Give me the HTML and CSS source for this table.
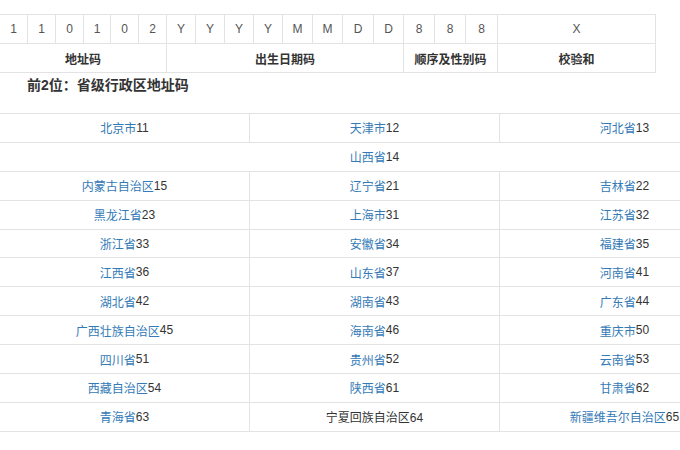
FILE: index.html
```html
<!DOCTYPE html>
<html lang="zh">
<head>
<meta charset="utf-8">
<title>身份证号码结构</title>
<link rel="stylesheet" href="styles.css">
</head>
<body>
<div class="page">
  <div class="id-grid">
    <div class="d">1</div><div class="d">1</div><div class="d">0</div><div class="d">1</div><div class="d">0</div><div class="d">2</div>
    <div class="d">Y</div><div class="d">Y</div><div class="d">Y</div><div class="d">Y</div><div class="d">M</div><div class="d">M</div><div class="d">D</div><div class="d">D</div>
    <div class="d">8</div><div class="d">8</div><div class="d">8</div><div class="d">X</div>
    <div class="h span6">地址码</div>
    <div class="h span8">出生日期码</div>
    <div class="h span3">顺序及性别码</div>
    <div class="h">校验和</div>
  </div>

  <h3 class="title">前2位：省级行政区地址码</h3>

  <div class="prov">
    <div class="c"><a>北京市</a>11</div><div class="c"><a>天津市</a>12</div><div class="c"><a>河北省</a>13</div>
    <div class="c full"><a>山西省</a>14</div>
    <div class="c"><a>内蒙古自治区</a>15</div><div class="c"><a>辽宁省</a>21</div><div class="c"><a>吉林省</a>22</div>
    <div class="c"><a>黑龙江省</a>23</div><div class="c"><a>上海市</a>31</div><div class="c"><a>江苏省</a>32</div>
    <div class="c"><a>浙江省</a>33</div><div class="c"><a>安徽省</a>34</div><div class="c"><a>福建省</a>35</div>
    <div class="c"><a>江西省</a>36</div><div class="c"><a>山东省</a>37</div><div class="c"><a>河南省</a>41</div>
    <div class="c"><a>湖北省</a>42</div><div class="c"><a>湖南省</a>43</div><div class="c"><a>广东省</a>44</div>
    <div class="c"><a>广西壮族自治区</a>45</div><div class="c"><a>海南省</a>46</div><div class="c"><a>重庆市</a>50</div>
    <div class="c"><a>四川省</a>51</div><div class="c"><a>贵州省</a>52</div><div class="c"><a>云南省</a>53</div>
    <div class="c"><a>西藏自治区</a>54</div><div class="c"><a>陕西省</a>61</div><div class="c"><a>甘肃省</a>62</div>
    <div class="c"><a>青海省</a>63</div><div class="c">宁夏回族自治区64</div><div class="c"><a>新疆维吾尔自治区</a>65</div>
  </div>
</div>
</body>
</html>
```
FILE: styles.css
```css
html, body {
  margin: 0;
  padding: 0;
  background: #fff;
  overflow: hidden;
}
body {
  width: 680px;
  height: 450px;
  font-family: "Liberation Sans", "Noto Sans CJK SC", sans-serif;
  font-size: 12px;
  color: #333;
}
.page {
  padding-top: 14px;
  width: 680px;
  overflow: hidden;
}
.id-grid {
  display: grid;
  grid-template-columns: 28px 28px 28px 27px 28px 28px 29px 29px 29px 29px 30px 30px 31px 30px 31px 31px 32px 158px;
  width: max-content;
  margin-left: -1px;
  border-top: 1px solid #e3e3e3;
  border-left: 1px solid #e3e3e3;
}
.id-grid > div {
  box-sizing: border-box;
  height: 29px;
  border-right: 1px solid #e3e3e3;
  border-bottom: 1px solid #e3e3e3;
  display: flex;
  align-items: center;
  justify-content: center;
}
.d {
  color: #555;
  font-size: 12px;
}
.h {
  font-weight: bold;
  font-size: 12px;
  color: #333;
}
.span6 { grid-column: span 6; }
.span8 { grid-column: span 8; }
.span3 { grid-column: span 3; }
.title {
  margin: 0;
  height: 40px;
  box-sizing: border-box;
  padding: 3px 0 0 27px;
  font-size: 14px;
  font-weight: bold;
  line-height: 18px;
  color: #333;
}
.prov {
  display: grid;
  grid-template-columns: 250px 250px 250px;
  grid-auto-rows: 28.9px;
  width: max-content;
  margin-left: -1px;
  border-top: 1px solid #e3e3e3;
  border-left: 1px solid #e3e3e3;
}
.prov .c {
  box-sizing: border-box;
  border-right: 1px solid #e3e3e3;
  border-bottom: 1px solid #e3e3e3;
  display: flex;
  align-items: center;
  justify-content: center;
  font-size: 12px;
  color: #333;
  white-space: nowrap;
}
.prov .full {
  grid-column: span 3;
}
.prov a {
  color: #337ab7;
  text-decoration: none;
}
```
